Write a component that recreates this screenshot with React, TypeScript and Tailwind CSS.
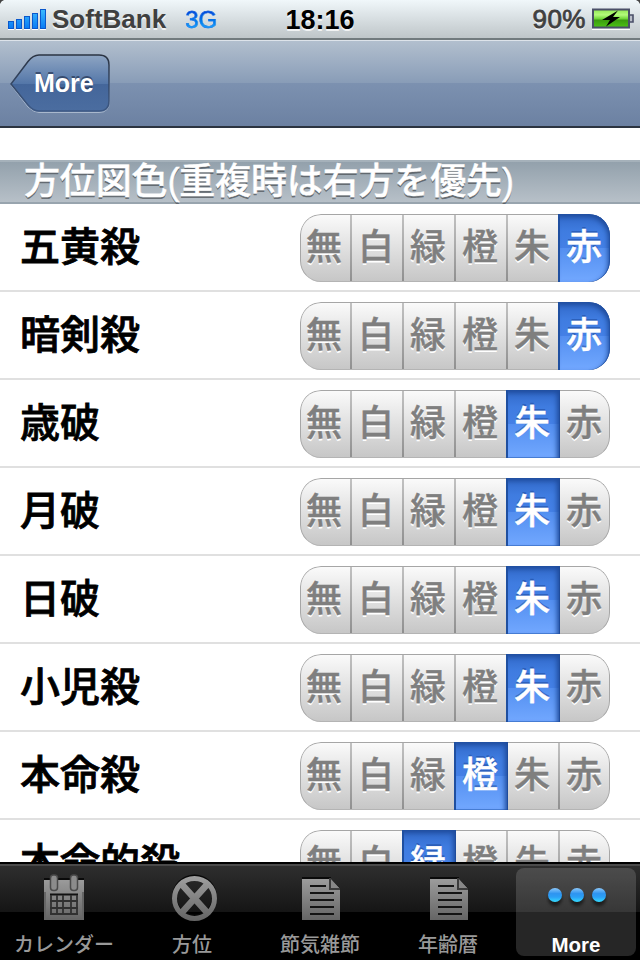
import clsx from "clsx";
import type { ReactNode } from "react";

const colors = ["無", "白", "緑", "橙", "朱", "赤"];

const rows = [
  { label: "五黄殺", selected: 5 },
  { label: "暗剣殺", selected: 5 },
  { label: "歳破", selected: 4 },
  { label: "月破", selected: 4 },
  { label: "日破", selected: 4 },
  { label: "小児殺", selected: 4 },
  { label: "本命殺", selected: 3 },
  { label: "本命的殺", selected: 2 },
];

function SignalBars() {
  return (
    <svg width="40" height="22" viewBox="0 0 40 22">
      <defs>
        <linearGradient id="signal" x1="0" y1="0" x2="0" y2="20" gradientUnits="userSpaceOnUse">
          <stop offset="0" stopColor="#3fc0ff" />
          <stop offset="1" stopColor="#0a7cf4" />
        </linearGradient>
      </defs>
      {[8, 10, 13, 16, 20].map((h, i) => (
        <g key={h}>
          <rect x={i * 8} y={21} width="6" height="1" fill="#fff" />
          <rect
            x={i * 8 + 0.5}
            y={21.5 - h}
            width="5"
            height={h - 1}
            fill="url(#signal)"
            stroke="#0a58cc"
          />
        </g>
      ))}
    </svg>
  );
}

function Battery() {
  return (
    <svg width="42" height="22" viewBox="0 0 42 22">
      <defs>
        <linearGradient id="battery" x1="0" y1="0" x2="0" y2="1">
          <stop offset="0" stopColor="#8ee650" />
          <stop offset="0.3" stopColor="#b4fa7c" />
          <stop offset="0.5" stopColor="#74d83c" />
          <stop offset="0.6" stopColor="#3c9c10" />
          <stop offset="1" stopColor="#4cc414" />
        </linearGradient>
      </defs>
      <rect x="0" y="20.500" width="38" height="1.500" fill="#fff" />
      <rect x="1" y="1.500" width="36" height="18" fill="url(#battery)" stroke="#4a4f68" strokeWidth="2" />
      <path d="M38 7h3v7h-3" fill="#b9bec8" stroke="#4a4f68" strokeWidth="1.600" />
      <path d="M26 2.500 10 12h8L14 18.500 28 9h-7z" fill="#000" />
    </svg>
  );
}

function StatusBar() {
  return (
    <div className="relative flex h-10 items-center border-b-2 border-[#727b7e] bg-linear-to-b from-[#f0f7fa] to-[#bfc6c9] pr-[6px] pl-2 text-[26px] leading-[38px] font-bold text-[#404040] [text-shadow:0_2px_0_rgba(255,255,255,0.75)]">
      <SignalBars />
      <span className="ml-1">SoftBank</span>
      <span className="ml-[19px] bg-linear-to-b from-[#0a30d0] from-25% to-[#20a8ff] to-75% bg-clip-text pt-[2px] text-[24px] font-normal text-transparent [-webkit-text-stroke:0.4px_#1670e8] [text-shadow:none]">
        3G
      </span>
      <span className="absolute inset-x-0 pt-px text-center text-[27px] text-black">18:16</span>
      <span className="mr-[6px] ml-auto font-normal tracking-[0.5px] [-webkit-text-stroke:0.8px_#404040]">90%</span>
      <Battery />
      <svg width="640" height="4" viewBox="0 0 640 4" className="absolute top-0 left-0">
        <path d="M0 0h4Q1 1 0 4zM640 0h-4q3 1 4 4z" fill="#444" />
      </svg>
    </div>
  );
}

function NavBar() {
  return (
    <div className="h-22 border-t border-b-2 border-t-[#dde3ea] border-b-[#2c3440] bg-[linear-gradient(#b2bfce,#889cb7_50%,#7c91b0_50%,#6c81a2)] pt-3 pl-[10px]">
      <button className="relative block h-[60px] w-[101px]">
        <svg width="101" height="60" viewBox="0 0 101 60" className="block">
          <defs>
            <linearGradient id="back" x1="0" y1="0" x2="0" y2="1">
              <stop offset="0" stopColor="#8ea5c3" />
              <stop offset="0.52" stopColor="#5376a8" />
              <stop offset="0.52" stopColor="#44669a" />
              <stop offset="1" stopColor="#4b6da0" />
            </linearGradient>
            <linearGradient id="backEdge" x1="0" y1="0" x2="0" y2="1">
              <stop offset="0" stopColor="#2b3443" />
              <stop offset="1" stopColor="#3d5985" />
            </linearGradient>
          </defs>
          <path
            d="M1 32 18 10Q24 3.500 29 3.500H89Q99 3.500 99.500 13V49Q99 59.500 89 59.500H29Q24 59.500 18 54Z"
            fill="none"
            stroke="#a9b8cd"
          />
          <path
            d="M1 31 18 8.500Q23 2 29 2H89Q99 2 99 12V48Q99 58 89 58H29Q23 58 18 52Z"
            fill="url(#back)"
            stroke="url(#backEdge)"
            strokeWidth="1.500"
          />
        </svg>
        <span className="absolute top-4 left-6 text-[25px] leading-7 font-bold text-white [text-shadow:0_-2px_0_rgba(30,45,75,0.65)]">
          More
        </span>
      </button>
    </div>
  );
}

function Segments({ selected }: { selected: number }) {
  return (
    <div className="relative mt-[2px] flex h-[68px] w-[310px] overflow-hidden rounded-[21px] bg-linear-to-b from-[#fbfbfb] to-[#c6c6c6] text-[36px] leading-[67px] font-medium">
      {colors.map((color, i) => (
        <div
          key={color}
          className={clsx(
            "shrink-0 text-center",
            i === 0 ? "w-[50px] pr-[2px]" : "w-[52px]",
            i === selected
              ? "relative z-10 bg-[linear-gradient(#3168c8,#3f7ce0_25%,#4480e6_50%,#538ff0_50%,#72a8ff)] text-white [-webkit-text-stroke:0.4px_#fff] [text-shadow:0_-2px_0_rgba(20,60,140,0.45)]"
              : "text-[#7f7f7f] [-webkit-text-stroke:0.4px_#7f7f7f] [text-shadow:0_2px_0_#fff]",
            i === selected && i < 5 && "-mr-[2px] w-[54px] pr-[2px] shadow-[inset_2px_0_0_#1f4fa0,inset_-1px_0_0_#1f4c9c,inset_-3px_3px_5px_#1f4c9c,inset_0_-1px_0_#4a80d8]",
            i === selected && i === 5 && "rounded-r-[21px] shadow-[inset_2px_0_0_#1f4fa0,inset_-1px_0_0_#2454a8,inset_-2px_3px_5px_#1f4c9c]",
            i !== selected && i > 0 && "bg-[linear-gradient(#c2c2c2,#8f8f8f)] bg-[length:2px_100%] bg-no-repeat",
          )}
        >
          {color}
        </div>
      ))}
      <div className="absolute inset-0 rounded-[21px] border-[1.5px] border-[#a6a6a6] border-b-[#b4b4b4]" />
    </div>
  );
}

function Tab({ label, active, children }: { label: string; active?: boolean; children: ReactNode }) {
  return (
    <div
      className={clsx(
        "mt-1 flex h-22 w-[120px] flex-col items-center rounded-lg",
        active ? "bg-white/15 text-white" : "text-[#999]",
      )}
    >
      <svg width="64" height="60" viewBox="0 0 64 60" className="block shrink-0">
        {children}
      </svg>
      <span
        className={clsx(
          "whitespace-nowrap",
          active ? "text-[20.5px] leading-[34px] font-bold" : "text-[20px] leading-[34px] font-medium",
        )}
      >
        {label}
      </span>
    </div>
  );
}

function CalendarIcon() {
  return (
    <>
      <path d="M12 10h40v2H12z" fill="#0a0a0a" />
      <path d="M12 12h40v40H12z" fill="url(#tabIcon)" />
      <path d="M13 24v27h38V24" fill="none" stroke="#666" strokeWidth="2" />
      <path d="M18 25.500h28v2H18z" fill="#111" />
      <path
        d="M19 27v20M25 27v20M31 27v20M39 27v20M45 27v20M18 33h28M18 40h28M18 46h28"
        stroke="#303030"
        strokeWidth="1.800"
        fill="none"
      />
      <rect x="18.500" y="7" width="7" height="15.500" rx="3" fill="#8c8c8c" stroke="#4a4a4a" strokeWidth="1.500" />
      <rect x="38.500" y="7" width="7" height="15.500" rx="3" fill="#8c8c8c" stroke="#4a4a4a" strokeWidth="1.500" />
    </>
  );
}

function DirectionIcon() {
  return (
    <g fill="none">
      <circle cx="34.500" cy="29" r="20" stroke="#080808" strokeWidth="5" />
      <circle cx="34.500" cy="30.500" r="20" stroke="url(#tabIcon)" strokeWidth="5" />
      <path d="M21.500 16 47.500 45M47.500 16 21.500 45" stroke="url(#tabIcon)" strokeWidth="6.500" />
    </g>
  );
}

function DocumentIcon() {
  return (
    <>
      <path d="M14 9h29v3H14z" fill="#0a0a0a" />
      <path d="M14 11h28l10 10v31H14z" fill="url(#tabIcon)" />
      <path d="M42 10v11h10" fill="#888" stroke="#3c3c3c" strokeWidth="2" />
      <path d="M22 18h16M22 25h24M22 32h24M22 39h24M22 46h24" stroke="#141414" strokeWidth="2" />
    </>
  );
}

function TabBar() {
  return (
    <div className="relative h-[98px] border-t-2 border-black bg-[linear-gradient(#4a4a4a_2px,#2e2e2e_2px,#151515_48px,#000_48px)]">
      <svg width="0" height="0" className="absolute">
        <defs>
          <linearGradient id="tabIcon" x1="0" y1="8" x2="0" y2="52" gradientUnits="userSpaceOnUse">
            <stop offset="0" stopColor="#a0a0a0" />
            <stop offset="1" stopColor="#656565" />
          </linearGradient>
          <linearGradient id="moreDot" x1="0" y1="0" x2="0" y2="1">
            <stop offset="0" stopColor="#8cc8fa" />
            <stop offset="0.4" stopColor="#2e94f0" />
            <stop offset="0.65" stopColor="#2ba0f6" />
            <stop offset="1" stopColor="#35dcff" />
          </linearGradient>
          <filter id="dotBlur">
            <feGaussianBlur stdDeviation="1.500" />
          </filter>
        </defs>
      </svg>
      <div className="grid grid-cols-5 justify-items-center">
        <Tab label="カレンダー">
          <CalendarIcon />
        </Tab>
        <Tab label="方位">
          <DirectionIcon />
        </Tab>
        <Tab label="節気雑節">
          <DocumentIcon />
        </Tab>
        <Tab label="年齢暦">
          <DocumentIcon />
        </Tab>
        <Tab label="More" active>
          {[11, 33, 55].map((x) => (
            <g key={x}>
              <circle cx={x} cy="31" r="7" fill="#000" opacity="0.5" filter="url(#dotBlur)" />
              <circle cx={x} cy="27" r="7" fill="url(#moreDot)" />
            </g>
          ))}
        </Tab>
      </div>
    </div>
  );
}

export default function App() {
  return (
    <div
      lang="ja"
      className="flex h-[960px] w-[640px] flex-col overflow-hidden bg-white font-['Liberation_Sans','Noto_Sans_CJK_JP',sans-serif]"
    >
      <StatusBar />
      <NavBar />
      <div className="min-h-0 flex-1 overflow-hidden pt-8">
        <div className="h-11 border-y-2 border-t-[#a5b1ba] border-b-[#98a4ae] bg-linear-to-b from-[#93a1ac] to-[#b7c0c8] pl-6 text-[36px] leading-[39px] font-medium tracking-[-0.15px] text-white [-webkit-text-stroke:0.4px_#fff] [text-shadow:0_2px_0_rgba(70,75,80,0.7)]">
          方位図色(重複時は右方を優先)
        </div>
        {rows.map((row) => (
          <div
            key={row.label}
            className="flex h-22 items-center justify-between border-b-2 border-[#e0e0e0] pr-[30px] pl-5"
          >
            <span className="text-[40px] leading-[60px] font-medium text-black [-webkit-text-stroke:0.8px_#000]">
              {row.label}
            </span>
            <Segments selected={row.selected} />
          </div>
        ))}
      </div>
      <TabBar />
    </div>
  );
}
